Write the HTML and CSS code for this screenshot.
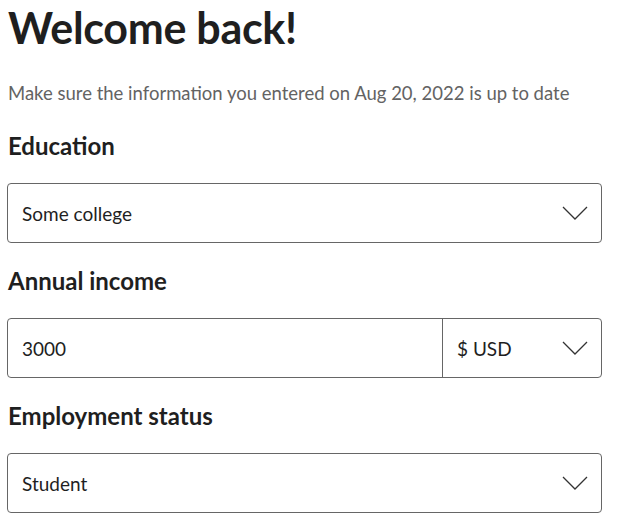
FILE: index.html
```html
<!DOCTYPE html>
<html lang="en">
<head>
<meta charset="utf-8">
<title>Welcome back</title>
<link rel="stylesheet" href="styles.css">
</head>
<body>
<main class="page">
  <h1 class="title">Welcome back!</h1>
  <p class="subtitle">Make sure the information you entered on Aug 20, 2022 is up to date</p>

  <section class="field">
    <h2 class="label">Education</h2>
    <div class="box">
      <span class="value">Some college</span>
      <svg class="chev" viewBox="0 0 26 14" width="26" height="14"><path d="M1 1 L13 13 L25 1" fill="none" stroke="#333" stroke-width="1.3"/></svg>
    </div>
  </section>

  <section class="field">
    <h2 class="label">Annual income</h2>
    <div class="box split">
      <span class="value grow">3000</span>
      <div class="currency">
        <span class="value">$ USD</span>
        <svg class="chev" viewBox="0 0 26 14" width="26" height="14"><path d="M1 1 L13 13 L25 1" fill="none" stroke="#333" stroke-width="1.3"/></svg>
      </div>
    </div>
  </section>

  <section class="field">
    <h2 class="label">Employment status</h2>
    <div class="box">
      <span class="value">Student</span>
      <svg class="chev" viewBox="0 0 26 14" width="26" height="14"><path d="M1 1 L13 13 L25 1" fill="none" stroke="#333" stroke-width="1.3"/></svg>
    </div>
  </section>
</main>
</body>
</html>
```

FILE: styles.css
```css
* { box-sizing: border-box; }
html, body { margin: 0; padding: 0; background: #fff; }
body {
  font-family: "Source Sans Pro", Lato, "Noto Sans", sans-serif;
  color: #1f1f1f;
}
.page {
  width: 595px;
  margin-left: 7px;
  display: flex;
  flex-direction: column;
}
.title {
  margin: 0;
  padding-left: 1px;
  font-size: 43px;
  font-weight: 700;
  line-height: 56px;
  letter-spacing: -0.3px;
}
.subtitle {
  margin: 25px 0 0;
  padding-left: 1px;
  font-size: 18.5px;
  line-height: 24px;
  color: #636363;
}
.field {
  display: flex;
  flex-direction: column;
}
.label {
  margin: 23px 0 0;
  padding-left: 1px;
  font-size: 24px;
  font-weight: 700;
  line-height: 30px;
}
.field:first-of-type .label { margin-top: 26px; }
.box {
  margin-top: 22px;
  height: 60px;
  border: 1px solid #666;
  border-radius: 4px;
  display: flex;
  align-items: center;
  padding: 0 13px 0 14px;
}
.value {
  flex: 1;
  font-size: 19px;
  color: #1f1f1f;
}
.chev { flex: none; }
.split { padding: 0; }
.grow { padding-left: 14px; }
.currency {
  width: 159px;
  height: 100%;
  border-left: 1px solid #666;
  display: flex;
  align-items: center;
  padding: 0 13px 0 14px;
}
```
